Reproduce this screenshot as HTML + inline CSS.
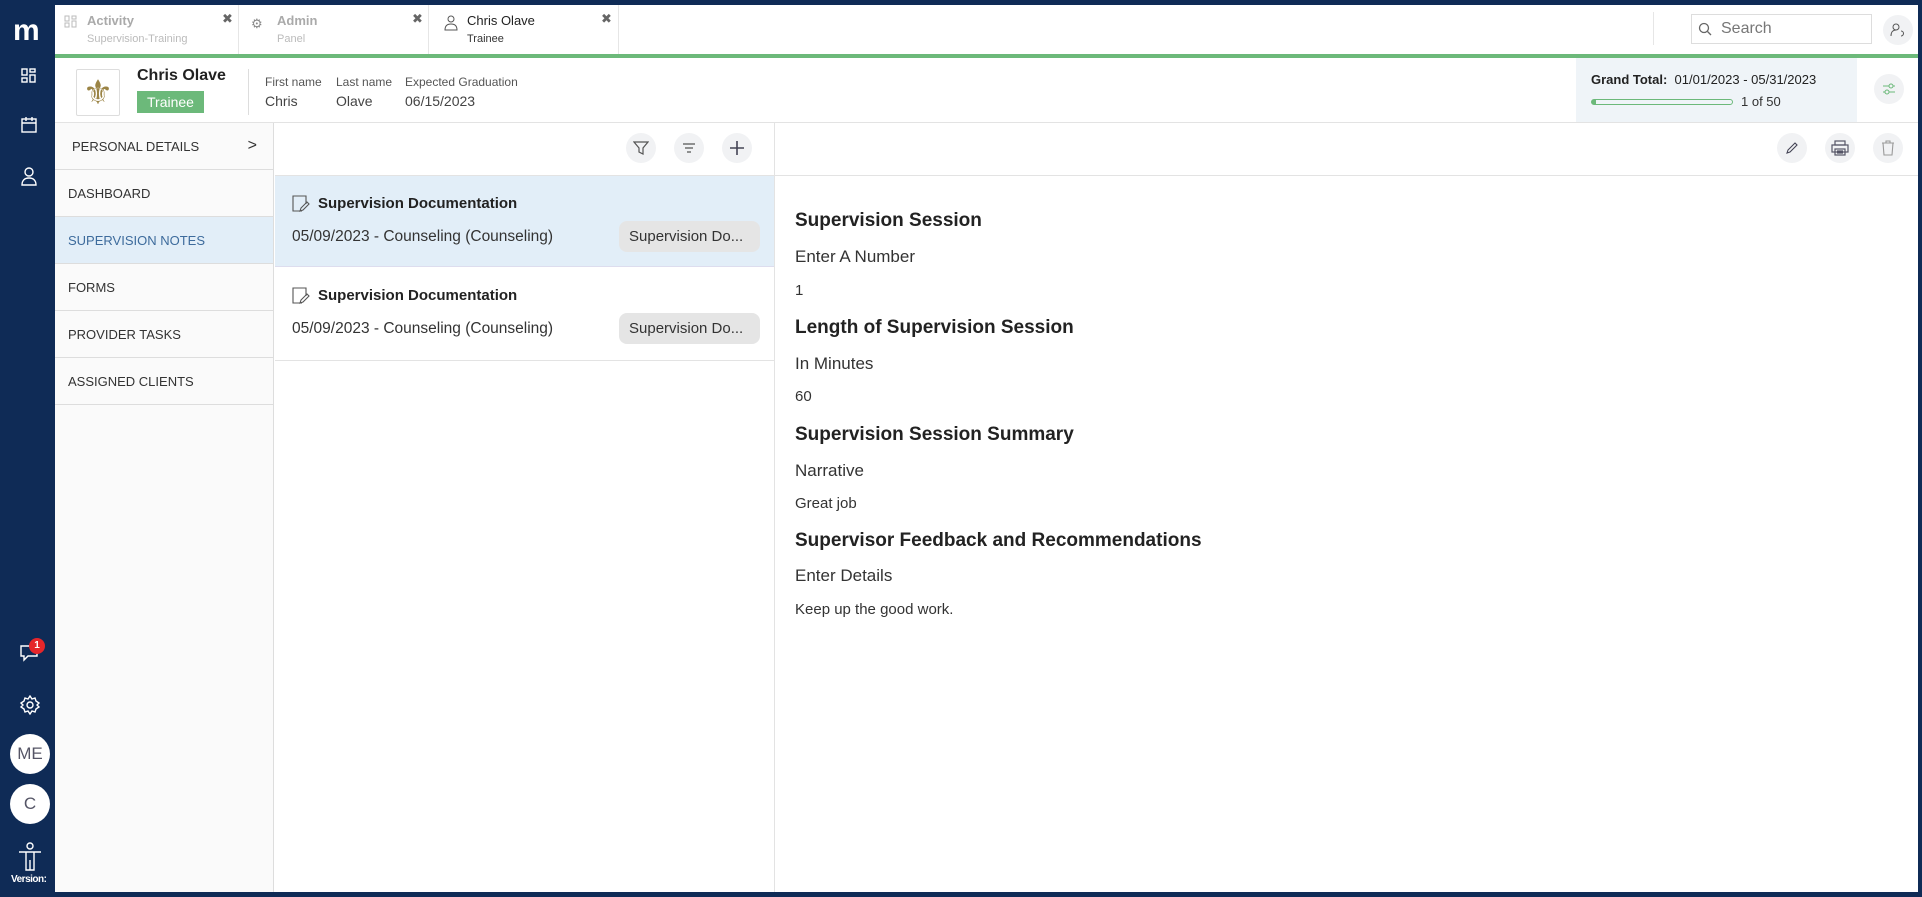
<!DOCTYPE html>
<html><head><meta charset="utf-8"><style>
*{box-sizing:border-box;margin:0;padding:0}
body{width:1922px;height:897px;background:#0f2b56;font-family:"Liberation Sans",sans-serif;color:#222;position:relative;overflow:hidden}
.a{position:absolute}
.ico{stroke:#fff;fill:none;stroke-width:1.4}
.circ{position:absolute;width:30px;height:30px;border-radius:50%;background:#f1f2f4;display:flex;align-items:center;justify-content:center}
.nav{position:absolute;left:0;width:218px;height:47px;border-bottom:1px solid #ddd;font-size:13px;color:#333;padding-left:13px;display:flex;align-items:center}
.h{position:absolute;left:795px;font-size:19px;font-weight:bold;color:#222}
.l{position:absolute;left:795px;font-size:17px;color:#333}
.v{position:absolute;left:795px;font-size:15px;color:#333}
</style></head><body>
<div class="a" style="left:13px;top:14px;color:#fff;font-size:30px;font-weight:bold;letter-spacing:-2px">m</div>
<svg class="a" style="left:21px;top:68px" width="16" height="16" viewBox="0 0 16 16"><g class="ico"><rect x="1" y="1" width="5" height="6"/><rect x="9" y="1" width="5" height="3"/><rect x="1" y="10" width="5" height="4"/><rect x="9" y="7" width="5" height="7"/></g></svg>
<svg class="a" style="left:20px;top:116px" width="18" height="18" viewBox="0 0 18 18"><g class="ico"><rect x="2" y="3" width="14" height="13"/><path d="M2 7h14M6 1v4M12 1v4"/></g></svg>
<svg class="a" style="left:20px;top:166px" width="18" height="20" viewBox="0 0 18 20"><g class="ico"><circle cx="9" cy="6" r="4"/><path d="M2 19c0-5 3-7 7-7s7 2 7 7z"/></g></svg>
<svg class="a" style="left:19px;top:642px" width="24" height="22" viewBox="0 0 24 22"><g class="ico"><path d="M2 4h16v10H9l-4 4v-4H2z"/></g></svg>
<div class="a" style="left:29px;top:638px;width:16px;height:16px;border-radius:50%;background:#e5262b;color:#fff;font-size:10px;font-weight:bold;text-align:center;line-height:16px">1</div>
<svg class="a" style="left:20px;top:695px" width="20" height="20" viewBox="0 0 20 20"><g class="ico"><circle cx="10" cy="10" r="3"/><path d="M10 1l2 3 3-1 1 3 3 2-2 2 2 2-3 2-1 3-3-1-2 3-2-3-3 1-1-3-3-2 2-2-2-2 3-2 1-3 3 1z"/></g></svg>
<div class="a" style="left:10px;top:734px;width:40px;height:40px;border-radius:50%;background:#fff;color:#556;font-size:17px;text-align:center;line-height:40px">ME</div>
<div class="a" style="left:10px;top:784px;width:40px;height:40px;border-radius:50%;background:#fff;color:#556;font-size:17px;text-align:center;line-height:40px">C</div>
<svg class="a" style="left:18px;top:842px" width="24" height="30" viewBox="0 0 24 30"><g class="ico"><circle cx="12" cy="4" r="3"/><path d="M1 10h22M8 10v18h8V10M12 18v10"/></g></svg>
<div class="a" style="left:11px;top:874px;color:#fff;font-size:10px;font-weight:bold;letter-spacing:-0.5px">Version:</div>
<div class="a" style="left:55px;top:5px;width:1863px;height:887px;background:#fff"></div>
<div class="a" style="left:55px;top:5px;width:184px;height:49px;border-right:1px solid #e6e6e6"></div>
<svg class="a" style="left:64px;top:15px" width="14" height="14" viewBox="0 0 14 14"><g fill="none" stroke="#bbb"><rect x="1" y="1" width="4" height="5"/><rect x="8" y="1" width="4" height="3"/><rect x="1" y="8" width="4" height="4"/><rect x="8" y="6" width="4" height="6"/></g></svg>
<div class="a" style="left:87px;top:13px;font-size:13px;color:#aaa;font-weight:bold">Activity</div>
<div class="a" style="left:87px;top:33px;font-size:11px;color:#bbb">Supervision-Training</div>
<div class="a" style="left:222px;top:11px;font-size:13px;color:#666">✖</div>
<div class="a" style="left:239px;top:5px;width:190px;height:49px;border-right:1px solid #e6e6e6"></div>
<div class="a" style="left:251px;top:16px;font-size:13px;color:#888">⚙</div>
<div class="a" style="left:277px;top:13px;font-size:13px;color:#aaa;font-weight:bold">Admin</div>
<div class="a" style="left:277px;top:33px;font-size:11px;color:#bbb">Panel</div>
<div class="a" style="left:412px;top:11px;font-size:13px;color:#666">✖</div>
<div class="a" style="left:429px;top:5px;width:190px;height:49px;border-right:1px solid #e6e6e6"></div>
<svg class="a" style="left:444px;top:15px" width="14" height="16" viewBox="0 0 14 16"><g fill="none" stroke="#555"><circle cx="7" cy="4" r="3"/><path d="M1 15c0-4 2-6 6-6s6 2 6 6z"/></g></svg>
<div class="a" style="left:467px;top:13px;font-size:13px;color:#222">Chris Olave</div>
<div class="a" style="left:467px;top:33px;font-size:11px;color:#333">Trainee</div>
<div class="a" style="left:601px;top:11px;font-size:13px;color:#666">✖</div>
<div class="a" style="left:1653px;top:12px;width:1px;height:33px;background:#e6e6e6"></div>
<div class="a" style="left:1691px;top:14px;width:181px;height:30px;border:1px solid #ddd"></div>
<svg class="a" style="left:1698px;top:22px" width="14" height="14" viewBox="0 0 14 14"><g fill="none" stroke="#666" stroke-width="1.3"><circle cx="6" cy="6" r="4.5"/><path d="M9.5 9.5l3.5 3.5"/></g></svg>
<div class="a" style="left:1721px;top:20px;font-size:16px;color:#777">Search</div>
<div class="circ" style="left:1883px;top:15px"><svg width="16" height="14" viewBox="0 0 16 14"><g fill="none" stroke="#555"><circle cx="6" cy="4" r="3"/><path d="M1 13c0-4 2-6 5-6M11 13a2.5 2.5 0 1 0 0-5"/></g></svg></div>
<div class="a" style="left:55px;top:54px;width:1863px;height:4px;background:#6cb97a"></div>
<div class="a" style="left:55px;top:122px;width:1863px;height:1px;background:#e3e3e3"></div>
<div class="a" style="left:76px;top:69px;width:44px;height:47px;border:1px solid #ddd;border-radius:2px;display:flex;align-items:center;justify-content:center"><span style="font-size:34px;color:#9b8445;line-height:1">⚜</span></div>
<div class="a" style="left:137px;top:67px;font-size:16px;font-weight:bold;color:#222">Chris Olave</div>
<div class="a" style="left:137px;top:91px;width:67px;height:22px;background:#6cb97a;color:#fff;font-size:14px;text-align:center;line-height:22px">Trainee</div>
<div class="a" style="left:248px;top:69px;width:1px;height:46px;background:#ddd"></div>
<div class="a" style="left:265px;top:75px;font-size:12px;color:#555">First name</div>
<div class="a" style="left:265px;top:93px;font-size:14px;color:#444">Chris</div>
<div class="a" style="left:336px;top:75px;font-size:12px;color:#555">Last name</div>
<div class="a" style="left:336px;top:93px;font-size:14px;color:#444">Olave</div>
<div class="a" style="left:405px;top:75px;font-size:12px;color:#555">Expected Graduation</div>
<div class="a" style="left:405px;top:93px;font-size:14px;color:#444">06/15/2023</div>
<div class="a" style="left:1576px;top:58px;width:281px;height:64px;background:#eff4f8"></div>
<div class="a" style="left:1591px;top:72px;font-size:13px;color:#222"><b>Grand Total:</b>&nbsp; 01/01/2023 - 05/31/2023</div>
<div class="a" style="left:1591px;top:99px;width:142px;height:6px;border:1px solid #6cb97a;border-radius:3px"><div style="width:4px;height:4px;background:#6cb97a"></div></div>
<div class="a" style="left:1741px;top:94px;font-size:13px;color:#333">1 of 50</div>
<div class="circ" style="left:1874px;top:74px"><svg width="14" height="14" viewBox="0 0 14 14"><g fill="none" stroke="#6cb97a"><path d="M1 4h6M11 4h2M1 10h2M7 10h6"/><circle cx="9" cy="4" r="2"/><circle cx="5" cy="10" r="2"/></g></svg></div>
<div class="a" style="left:55px;top:123px;width:219px;height:769px;background:#fafafa;border-right:1px solid #ddd"></div>
<div class="a" style="left:55px;top:123px">
<div class="nav" style="top:0;padding-left:17px">PERSONAL DETAILS<span style="position:absolute;right:16px;font-size:16px">&gt;</span></div>
<div class="nav" style="top:47px">DASHBOARD</div>
<div class="nav" style="top:94px;background:#e2eef8;color:#3d6b9c">SUPERVISION NOTES</div>
<div class="nav" style="top:141px">FORMS</div>
<div class="nav" style="top:188px">PROVIDER TASKS</div>
<div class="nav" style="top:235px">ASSIGNED CLIENTS</div>
</div>
<div class="a" style="left:774px;top:123px;width:1px;height:769px;background:#e3e3e3"></div>
<div class="a" style="left:275px;top:175px;width:1643px;height:1px;background:#e3e3e3"></div>
<div class="circ" style="left:626px;top:133px"><svg width="16" height="16" viewBox="0 0 16 16"><path d="M1 2h14l-5 6v6l-4-2V8z" fill="none" stroke="#555" stroke-width="1.2"/></svg></div>
<div class="circ" style="left:674px;top:133px"><svg width="14" height="12" viewBox="0 0 14 12"><path d="M1 2h12M3 6h8M5 10h4" stroke="#555" stroke-width="1.2"/></svg></div>
<div class="circ" style="left:722px;top:133px"><svg width="16" height="16" viewBox="0 0 16 16"><path d="M8 1v14M1 8h14" stroke="#445" stroke-width="1.6"/></svg></div>
<div class="a" style="left:275px;top:176px;width:499px;height:91px;background:#e2eef8;border-bottom:1px solid #dde"></div>
<div class="a" style="left:275px;top:360px;width:499px;height:1px;background:#e3e3e3"></div>
<svg class="a" style="left:292px;top:195px" width="18" height="18" viewBox="0 0 18 18"><g fill="none" stroke="#555" stroke-width="1.1"><path d="M10 16H1V1h13v8"/><path d="M8 16l1-3 6-6 2 2-6 6z"/></g></svg>
<div class="a" style="left:318px;top:195px;font-size:15px;font-weight:bold;color:#222">Supervision Documentation</div>
<div class="a" style="left:292px;top:228px;font-size:15.5px;color:#333">05/09/2023 - Counseling (Counseling)</div>
<div class="a" style="left:619px;top:221px;width:141px;height:31px;background:#e5e5e5;border-radius:8px;font-size:15px;color:#333;line-height:31px;padding-left:10px">Supervision Do...</div>
<svg class="a" style="left:292px;top:287px" width="18" height="18" viewBox="0 0 18 18"><g fill="none" stroke="#555" stroke-width="1.1"><path d="M10 16H1V1h13v8"/><path d="M8 16l1-3 6-6 2 2-6 6z"/></g></svg>
<div class="a" style="left:318px;top:287px;font-size:15px;font-weight:bold;color:#222">Supervision Documentation</div>
<div class="a" style="left:292px;top:320px;font-size:15.5px;color:#333">05/09/2023 - Counseling (Counseling)</div>
<div class="a" style="left:619px;top:313px;width:141px;height:31px;background:#e5e5e5;border-radius:8px;font-size:15px;color:#333;line-height:31px;padding-left:10px">Supervision Do...</div>
<div class="circ" style="left:1777px;top:133px"><svg width="14" height="14" viewBox="0 0 14 14"><path d="M2 12l1-3 7-7 2 2-7 7z" fill="none" stroke="#445" stroke-width="1.1"/></svg></div>
<div class="circ" style="left:1825px;top:133px"><svg width="18" height="16" viewBox="0 0 18 16"><g fill="none" stroke="#556" stroke-width="1.2"><rect x="4" y="1" width="10" height="4"/><rect x="1" y="5" width="16" height="7"/><rect x="4" y="9" width="10" height="6"/><path d="M6 11h6M6 13h6"/></g></svg></div>
<div class="circ" style="left:1873px;top:133px"><svg width="14" height="16" viewBox="0 0 14 16"><g fill="none" stroke="#999" stroke-width="1.1"><path d="M1 3h12M5 3V1h4v2M2 3l1 12h8l1-12"/></g></svg></div>
<div class="h" style="top:210px">Supervision Session</div>
<div class="l" style="top:247px">Enter A Number</div>
<div class="v" style="top:282px">1</div>
<div class="h" style="top:317px">Length of Supervision Session</div>
<div class="l" style="top:354px">In Minutes</div>
<div class="v" style="top:388px">60</div>
<div class="h" style="top:424px">Supervision Session Summary</div>
<div class="l" style="top:461px">Narrative</div>
<div class="v" style="top:495px">Great job</div>
<div class="h" style="top:530px">Supervisor Feedback and Recommendations</div>
<div class="l" style="top:566px">Enter Details</div>
<div class="v" style="top:601px">Keep up the good work.</div>
</body></html>
